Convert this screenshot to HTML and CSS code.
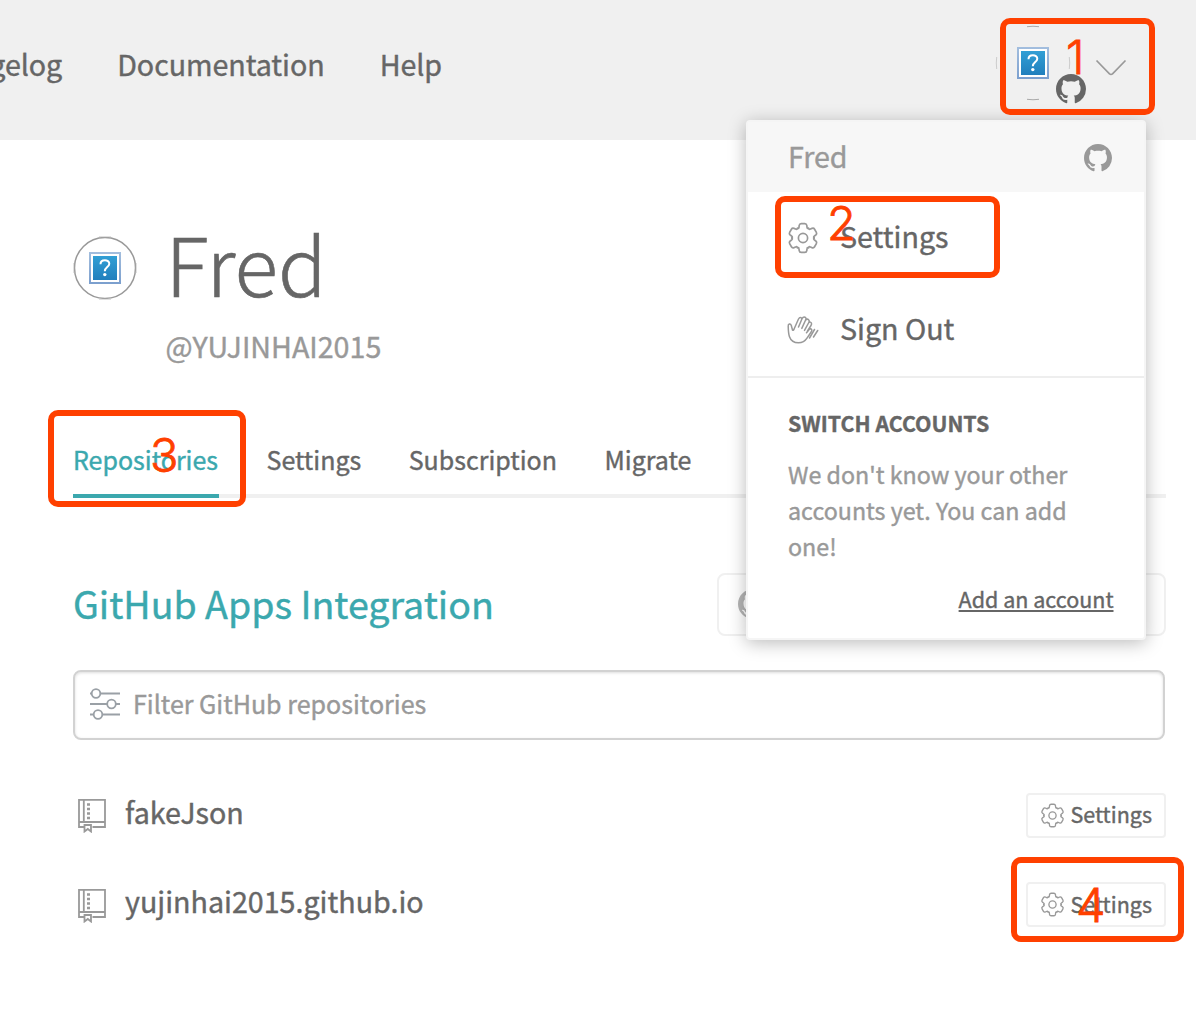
FILE: index.html
```
<!DOCTYPE html>
<html lang="en">
<head>
<meta charset="utf-8">
<title>Fred - Repositories</title>
<link rel="stylesheet" href="styles.css">
</head>
<body>
<svg class="defs" aria-hidden="true">
  <defs>
    <linearGradient id="blue" x1="0" y1="0" x2="0" y2="1"><stop offset="0" stop-color="#319fd5"/><stop offset="1" stop-color="#217fbd"/></linearGradient>
    <linearGradient id="frame" x1="0" y1="0" x2="0" y2="1"><stop offset="0" stop-color="#a3bede"/><stop offset="1" stop-color="#7b9fce"/></linearGradient>
    <symbol id="octocat" viewBox="0 0 16 16"><path fill="currentColor" d="M8 0C3.58 0 0 3.58 0 8c0 3.54 2.29 6.53 5.47 7.59.4.07.55-.17.55-.38 0-.19-.01-.82-.01-1.49-2.01.37-2.53-.49-2.69-.94-.09-.23-.48-.94-.82-1.13-.28-.15-.68-.52-.01-.53.63-.01 1.08.58 1.23.82.72 1.21 1.87.87 2.33.66.07-.52.28-.87.51-1.07-1.78-.2-3.64-.89-3.64-3.95 0-.87.31-1.59.82-2.15-.08-.2-.36-1.02.08-2.12 0 0 .67-.21 2.2.82.64-.18 1.32-.27 2-.27s1.36.09 2 .27c1.53-1.04 2.2-.82 2.2-.82.44 1.1.16 1.92.08 2.12.51.56.82 1.27.82 2.15 0 3.07-1.87 3.75-3.65 3.95.29.25.54.73.54 1.48 0 1.07-.01 1.93-.01 2.2 0 .21.15.46.55.38A8.01 8.01 0 0 0 16 8c0-4.42-3.58-8-8-8z"/></symbol>
    <path id="tooth" d="M-5.6-9.7Q-4.1-9.2-4-10.9L-3.8-12.6Q-3.5-14.4-1.8-14.4H1.8Q3.5-14.4 3.8-12.6L4-10.9Q4.1-9.2 5.6-9.7"/>
    <symbol id="gear" viewBox="-16 -16 32 32">
      <g fill="none" stroke="currentColor" stroke-width="1.7" stroke-linecap="round">
        <use href="#tooth"/><use href="#tooth" transform="rotate(60)"/><use href="#tooth" transform="rotate(120)"/><use href="#tooth" transform="rotate(180)"/><use href="#tooth" transform="rotate(240)"/><use href="#tooth" transform="rotate(300)"/>
        <circle r="4.6"/>
      </g>
    </symbol>
    <symbol id="missing" viewBox="0 0 32 32">
      <rect width="32" height="32" fill="url(#frame)"/><rect x="2" y="2" width="28" height="28" fill="#fff"/><rect x="4" y="4" width="24" height="24" fill="url(#blue)"/>
      <path d="M11.5 12.2C11.5 7 20.3 7.2 20.3 11.8 20.3 15 15.8 15.2 15.8 19.2" fill="none" stroke="#fff" stroke-width="2"/><circle cx="15.8" cy="22.6" r="1.7" fill="#fff"/>
    </symbol>
    <symbol id="repo" viewBox="0 0 30 36">
      <g fill="none" stroke="currentColor" stroke-width="1.8"><path d="M7 30H2V2.900H28V30H15.500M2 25H28M6.800 3V25"/><path d="M7.500 28H14V34.500L10.800 32L7.500 34.500Z"/><path d="M10 7.500H13M10 12H13M10 16.500H13M10 21H13" stroke-width="2.400"/></g>
    </symbol>
  </defs>
</svg>

<header class="topbar">
  <nav class="nav"><a>Changelog</a><a>Documentation</a><a>Help</a></nav>
  <div class="user">
    <svg class="user-avatar" viewBox="0 0 76 76"><g fill="none" stroke="#aaa" stroke-width="1"><path d="M32 1.700Q38 .800 44 1.700M32 74.300Q38 75.200 44 74.300"/><path d="M1.700 32Q.900 38 1.700 44M74.300 32Q75.100 38 74.300 44" stroke="#ccc"/></g><use href="#missing" x="22" y="22" width="32" height="32"/></svg>
    <svg class="user-badge"><use href="#octocat"/></svg>
    <svg class="chevron" viewBox="0 0 32 18"><path d="M1.500 1.500L14.500 14.800Q16 16 17.500 14.800L30.500 1.500" fill="none" stroke="#999" stroke-width="1.700"/></svg>
  </div>
</header>

<main class="page">
  <section class="profile">
    <svg class="profile-avatar" viewBox="0 0 64 64"><circle cx="32" cy="32" r="30.500" fill="#fff" stroke="#999" stroke-width="1.500"/><path d="M26 .600H38M26 63.400H38M.600 27V37M63.400 27V37" stroke="#ddd"/><use href="#missing" x="16" y="16" width="32" height="32"/></svg>
    <div class="identity"><h1>Fred</h1><p>@YUJINHAI2015</p></div>
  </section>

  <nav class="tabs"><a class="active">Repositories</a><a>Settings</a><a>Subscription</a><a>Migrate</a></nav>

  <div class="section-head">
    <h2>GitHub Apps Integration</h2>
    <div class="manage"><svg class="manage-icon"><use href="#octocat"/></svg></div>
  </div>

  <div class="filter">
    <svg class="filter-icon" viewBox="0 0 32 34"><g fill="#fff" stroke="#9aa0a6" stroke-width="1.800"><path d="M1 6.500H31M1 17H31M1 27.500H31"/><circle cx="7" cy="6.500" r="4.300"/><circle cx="22.500" cy="17" r="4.300"/><circle cx="9" cy="27.500" r="4.300"/></g></svg>
    <span>Filter GitHub repositories</span>
  </div>

  <ul class="repos">
    <li><svg class="repo-icon"><use href="#repo"/></svg><span class="repo-name">fakeJson</span><a class="button"><svg><use href="#gear"/></svg><span>Settings</span></a></li>
    <li><svg class="repo-icon"><use href="#repo"/></svg><span class="repo-name">yujinhai2015.github.io</span><a class="button"><svg><use href="#gear"/></svg><span>Settings</span></a></li>
  </ul>
</main>

<aside class="menu">
  <div class="menu-head"><span>Fred</span><svg><use href="#octocat"/></svg></div>
  <div class="menu-items">
    <a><svg><use href="#gear"/></svg><span>Settings</span></a>
    <a><svg viewBox="0 0 32 32"><g fill="none" stroke="currentColor" stroke-width="1.500" stroke-linecap="round" stroke-linejoin="round"><path d="M5.500 16L4.300 11.500Q3.700 9.600 2.300 10Q1 10.400 1.200 12.500Q1.400 19.500 2.400 22.500Q4.500 28.800 11.500 28.800Q17 28.800 20 24.200L24.500 17.500Q25.500 15.200 23.500 14.700Q22.500 14.700 21.800 16L19.500 18.800M5.500 16Q6.500 17 7.300 14.500L11.500 5Q12.600 3 14 3.600Q15.300 4.300 14.500 6L11.500 13M14.500 6Q16 2.300 18 3.200Q19.700 4.200 18.500 6.200L14.800 14.400M18.500 6.200Q20 4.400 21.500 5.600Q22.800 6.700 21.800 8.500L17.500 16.400M21.800 8.500Q23.600 7.500 24.400 9Q24.900 10.200 24 11.500L20.500 17"/><path d="M27.500 15.500L22.500 24M30.700 16.500L26.500 23"/></g></svg><span>Sign Out</span></a>
  </div>
  <div class="switch">
    <h3>SWITCH ACCOUNTS</h3>
    <p>We don't know your other<br>accounts yet. You can add<br>one!</p>
    <a>Add an account</a>
  </div>
</aside>

<div class="callout one"><b>1</b></div>
<div class="callout two"><b>2</b></div>
<div class="callout three"><b>3</b></div>
<div class="callout four"><b>4</b></div>
</body>
</html>
```
FILE: styles.css
```
* { box-sizing: border-box; }
body { margin: 0; position: relative; height: 1014px; overflow: hidden; background: #fff; color: #666; font-family: "Noto Sans CJK SC", "Open Sans", sans-serif; font-size: 28.650px; line-height: 40px; -webkit-text-stroke: .4px currentColor; }
h1, h2, h3, p, ul { margin: 0; padding: 0; font-weight: 400; }
svg { display: block; flex: none; }
span, a, h1, h2, h3, p { white-space: nowrap; }
.defs { position: absolute; width: 0; height: 0; }

.topbar { height: 140px; background: #f0f0f0; display: flex; justify-content: space-between; }
.nav { width: 442px; padding-top: 44px; display: flex; justify-content: flex-end; gap: 55px; overflow: hidden; letter-spacing: -.06px; }
.user { width: 201px; padding-top: 25px; display: flex; position: relative; }
.user-avatar { width: 76px; height: 76px; }
.user-badge { position: absolute; left: 61px; top: 74px; width: 30px; height: 30px; color: #666; }
.chevron { width: 32px; height: 18px; margin: 34px 0 0 24px; }

.page { padding: 0 30px 0 73px; }
.profile { height: 270px; padding-top: 96px; display: flex; }
.profile-avatar { width: 64px; height: 64px; }
.identity { padding-left: 28.500px; }
h1 { font-size: 80.500px; line-height: 92px; margin-top: -20px; font-weight: 300; -webkit-text-stroke-width: .6px; }
.identity p { color: #999; margin-top: 18px; }

.tabs { height: 88px; border-bottom: 4px solid #f0f0f0; display: flex; gap: 47.500px; font-size: 25px; }
.tabs a { height: 88px; padding-top: 29px; }
.tabs .active { width: 146px; color: #3ba8ae; border-bottom: 4px solid #3ba8ae; }

.section-head { margin-top: 75px; height: 62px; display: flex; justify-content: space-between; }
h2 { font-size: 37.550px; line-height: 60px; color: #3ba8ae; }
.manage { width: 449px; height: 63px; border: 2px solid #f0f0f0; border-radius: 8px; padding: 14px 19px; }
.manage-icon { width: 30px; height: 30px; color: #b5b5b5; }

.filter { width: 1092px; height: 70px; margin-top: 35px; border: 2px solid #d2d2d2; border-radius: 8px; box-shadow: inset 0 1px 3px #ddd; padding: 0 14px; display: flex; align-items: center; color: #999; font-size: 25.050px; }
.filter-icon { width: 32px; height: 34px; margin: 0 12px 2px 0; }
.filter span { padding-bottom: 5px; }

.repos { list-style: none; margin-top: 53px; }
.repos li { height: 89px; display: flex; align-items: flex-start; }
.repo-icon { width: 30px; height: 36px; color: #999; margin: 4px 18px 0 4px; }
li + li .repo-icon { margin-top: 5px; }
.repo-name { flex: 1; margin-top: -1px; }
.button { width: 140px; height: 45px; border: 2px solid #f0f0f0; border-radius: 4px; display: flex; align-items: center; padding-left: 11.500px; font-size: 21.500px; }
.button span { padding-bottom: 3px; }
li + li .button span { padding-bottom: 1px; }
.button svg { width: 25px; height: 25px; margin-right: 6px; color: #999; }

.menu { position: absolute; left: 746px; top: 120px; width: 400px; height: 520px; background: #fff; border: 2px solid #f5f5f5; border-radius: 4px; box-shadow: 0 3px 18px rgba(0,0,0,.27); }
.menu-head { height: 70px; background: #f7f7f7; color: #999; display: flex; justify-content: space-between; align-items: center; padding: 2px 32px 0 40px; }
.menu-head span, .menu-items span { padding-bottom: 4px; }
.menu-head svg { width: 28px; height: 28px; }
.menu-items { height: 186px; border-bottom: 2px solid #eee; }
.menu-items a { height: 92px; padding-left: 39px; display: flex; align-items: center; }
.menu-items svg { width: 32px; height: 32px; margin-right: 21px; color: #999; }
.switch { padding: 25px 31px 0 40px; display: flex; flex-direction: column; }
h3 { font-size: 21.300px; font-weight: 700; }
.switch p { margin-top: 13px; font-size: 23.250px; line-height: 36px; color: #999; }
.switch a { margin: 15px -.5px 0 0; align-self: flex-end; font-size: 21.500px; text-decoration: underline; text-decoration-thickness: 1.500px; text-underline-offset: 2px; }

.callout { position: absolute; border: 6px solid #ff4000; border-radius: 10px; }
.callout b { position: absolute; color: #ff4000; font: 300 47px/48px Inter, sans-serif; -webkit-text-stroke: .8px #ff4000; }
.one { left: 1000px; top: 18px; width: 155px; height: 97px; }
.one b { left: 60px; top: 9px; }
.two { left: 775px; top: 196px; width: 225px; height: 82px; }
.two b { left: 46px; top: -3px; }
.three { left: 48px; top: 410px; width: 198px; height: 97px; }
.three b { left: 96px; top: 15px; }
.four { left: 1011px; top: 857px; width: 173px; height: 85px; }
.four b { left: 59px; top: 18px; }
```
